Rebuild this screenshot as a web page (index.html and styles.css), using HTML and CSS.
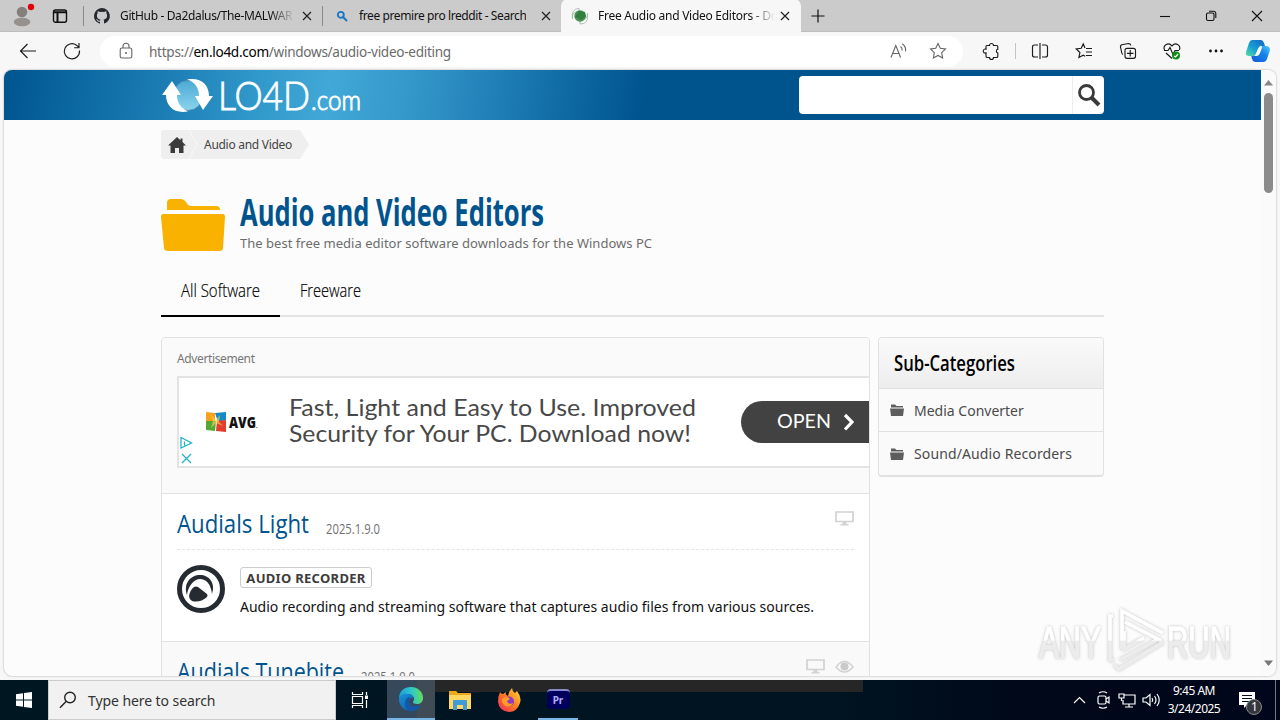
FILE: index.html
```html
<!DOCTYPE html>
<html lang="en">
<head>
<meta charset="utf-8">
<title>Free Audio and Video Editors</title>
<link rel="stylesheet" href="styles.css">
</head>
<body>
<header class="tabbar">
  <div class="profile"><svg width="26" height="28" viewBox="0 0 26 28"><circle cx="13" cy="10" r="5.3" fill="#85807c"/><ellipse cx="13" cy="20" rx="8.3" ry="4.2" fill="#96918c"/><circle cx="22" cy="5" r="3.2" fill="#e3000b"/></svg></div>
  <div class="workspaces"><svg width="16" height="16" viewBox="0 0 16 16" fill="none" stroke="#111" stroke-width="1.4"><rect x="1.5" y="2" width="13" height="12.3" rx="2"/><path d="M1.5 4.2h13M5.5 4v10" stroke-width="2"/></svg></div>
  <div class="tab tab-first">
    <svg class="fav" width="16" height="16" viewBox="0 0 16 16"><path fill="#24292f" d="M8 0a8 8 0 0 0-2.5 15.6c.4.1.5-.2.5-.4v-1.5c-2.2.5-2.7-1-2.7-1-.4-.9-.9-1.2-.9-1.2-.7-.5.1-.5.1-.5.8.1 1.2.8 1.2.8.7 1.3 1.9.9 2.4.7.1-.5.3-.9.5-1.1-1.8-.2-3.7-.9-3.7-4 0-.9.3-1.6.8-2.1-.1-.2-.4-1 .1-2.1 0 0 .7-.2 2.2.8a7.6 7.6 0 0 1 4 0c1.5-1 2.2-.8 2.2-.8.5 1.1.2 1.9.1 2.1.5.6.8 1.3.8 2.1 0 3.1-1.9 3.8-3.7 4 .3.3.6.8.6 1.5v2.2c0 .2.1.5.6.4A8 8 0 0 0 8 0z"/></svg>
    <span class="tab-title fade t1">GitHub - Da2dalus/The-MALWAR</span>
    <svg class="x" width="10" height="10" viewBox="0 0 10 10"><path d="M1 1l8 8M9 1L1 9"/></svg>
  </div>
  <div class="tab tab-second">
    <svg class="fav" width="14" height="14" viewBox="0 0 14 14" fill="none" stroke="#1976c5"><circle cx="5.8" cy="5.8" r="3" stroke-width="1.8"/><path d="M8 8l4 4" stroke-width="2"/></svg>
    <span class="tab-title t2">free premire pro lreddit - Search</span>
    <svg class="x" width="10" height="10" viewBox="0 0 10 10"><path d="M1 1l8 8M9 1L1 9"/></svg>
  </div>
  <div class="tab tab-active">
    <svg class="fav" width="18" height="18" viewBox="0 0 18 18"><path d="M8 1.500Q0 1.500 1.500 12 0 5 8 4zM9 17q9 0 7.500-10.500Q17 13 9 14z" fill="#fff" stroke="#9bb49d" stroke-width=".8"/><circle cx="9" cy="9" r="5.700" fill="#4e9256"/><path d="M4 10l4-6 6 1 1 5-5 3z" fill="#2f7f3d"/></svg>
    <span class="tab-title fade t3">Free Audio and Video Editors - Do</span>
    <svg class="x" width="10" height="10" viewBox="0 0 10 10"><path d="M1 1l8 8M9 1L1 9"/></svg>
  </div>
  <div class="newtab"><svg width="14" height="14" viewBox="0 0 14 14"><path d="M7 .5v13M.5 7h13" stroke="#111" stroke-width="1.2"/></svg></div>
  <div class="winctl">
    <span><svg width="12" height="12" viewBox="0 0 12 12"><path d="M1 6.5h10"/></svg></span>
    <span><svg width="12" height="12" viewBox="0 0 12 12"><rect x="1.5" y="3" width="7.5" height="7.5" rx="1.5"/><path d="M4 1.3h4.5a2.3 2.3 0 0 1 2.3 2.3V8"/></svg></span>
    <span><svg width="12" height="12" viewBox="0 0 12 12"><path d="M1 1l10 10M11 1L1 11"/></svg></span>
  </div>
</header>

<nav class="toolbar">
  <span class="tool"><svg width="18" height="18" viewBox="0 0 18 18"><path d="M17 9H1.500M8.500 2L1.500 9l7 7"/></svg></span>
  <span class="tool"><svg width="18" height="18" viewBox="0 0 18 18"><path d="M16.500 8.500A7.600 7.600 0 1 1 13.500 3.200L16 5.500M16 1v4.700h-4.800"/></svg></span>
  <div class="address">
    <svg class="lock" width="14" height="18" viewBox="0 0 14 18"><rect x="1.200" y="6" width="11.600" height="10" rx="1.800"/><path d="M4 6V4.200a3 3 0 0 1 6 0V6"/><circle cx="7" cy="11" r="1" fill="#666" stroke="none"/></svg>
    <span class="url">https://<b>en.lo4d.com</b>/windows/audio-video-editing</span>
    <svg class="aloud" width="18" height="18" viewBox="0 0 18 18"><path d="M2 15.500L6.800 3.500l4.800 12M3.800 11.500h6M11.500 4.500a4 4 0 0 1 1.500 4M13.300 1.800q4 3 3.200 7.500"/></svg>
    <svg class="star" width="18" height="18" viewBox="0 0 18 18"><path d="M9 1.500l2.300 4.800 5.200.7-3.800 3.700.9 5.300L9 13.500 4.400 16l.9-5.300L1.500 7l5.200-.7z"/></svg>
  </div>
  <span class="tool ext"><svg width="18" height="18" viewBox="0 0 18 18"><path d="M4.800 3.500H7.500a2 2 0 0 1 4 0h3q1.300 0 1.300 1.200V7.300a1.900 1.900 0 0 0 0 3.700v3.200q0 1.300-1.300 1.300h-3a2 2 0 0 1-4 0H5.500q-1.500 0-1.500-1.300v-3.300a2 2 0 1 1 0-3.700V4.500q0-1 .8-1z"/></svg></span>
  <i class="sep"></i>
  <span class="tool"><svg width="18" height="18" viewBox="0 0 18 18"><path d="M7 3H3.500Q1.500 3 1.500 5v8q0 2 2 2H7M11 3h3.500q2 0 2 2v8q0 2-2 2H11M9 1v16"/></svg></span>
  <span class="tool"><svg width="18" height="18" viewBox="0 0 18 18"><path d="M10 6L8.200 2 6.200 6.300 1.200 7l3.700 3.500-1 5 4.300-2.300 2 1M11 6.500h6M11 10h6M11 13.500h6"/></svg></span>
  <span class="tool"><svg width="18" height="18" viewBox="0 0 18 18"><rect x="6" y="6.300" width="10.500" height="10" rx="2"/><path d="M8 11.300h6.500M11.200 8v6.500M4 12.500Q3 12 2.800 11L1.500 5Q1.200 3 3 2.700L9.500 1.500q2 0 2.300 2"/></svg></span>
  <span class="tool"><svg width="18" height="18" viewBox="0 0 18 18"><path d="M1.500 8C-.5 3 5.500-.5 9 4c3.500-4.500 9-1 7.500 4M1 8.500h4L7 5.500l3 7 2-4h4M3 11l6 5.500"/><circle cx="13" cy="13.500" r="4" fill="#138a18" stroke="none"/><path d="M11 14l1.500 1 2.600-3" stroke="#fff"/></svg></span>
  <span class="tool"><svg width="18" height="18" viewBox="0 0 18 18"><g fill="#111" stroke="none"><circle cx="3.500" cy="9" r="1.400"/><circle cx="9" cy="9" r="1.400"/><circle cx="14.500" cy="9" r="1.400"/></g></svg></span>
  <span class="copilot"><svg width="26" height="26" viewBox="0 0 26 26"><defs><linearGradient id="ca" x1="0" y1="1" x2="1" y2="0"><stop offset="0" stop-color="#59dfa0"/><stop offset=".45" stop-color="#169fd4"/><stop offset="1" stop-color="#1463c4"/></linearGradient><linearGradient id="cb" x1="0" y1="1" x2="1" y2="0"><stop offset="0" stop-color="#1256d8"/><stop offset=".6" stop-color="#1685e8"/><stop offset="1" stop-color="#52c9fa"/></linearGradient></defs><path d="M7 2h9q2 0 3 3l1 3h-4q-2 0-3 3l-2 5q-1 2-3 2H4q-4 0-3-4L4 5q1-3 3-3z" fill="url(#ca)"/><path d="M19 24h-9q-2 0-3-3l-.7-3H9q2 0 3-2l2-5q1-3 3-3h4q4 0 4 4l-3 9q-1 3-3 3z" fill="url(#cb)"/><path d="M10 18l3-7q1-3 4-3h-1q1.500 0 .5 3l-1.500 4q-1 3-4 3z" fill="#fff"/></svg></span>
</nav>

<main class="window">
  <div class="page">
    <header class="site-header">
      <div class="wrap head-row">
        <svg class="logo" width="202" height="40" viewBox="0 0 202 40">
          <defs><linearGradient id="globe" x2="0" y2="1"><stop stop-color="#4ba9d5"/><stop offset="1" stop-color="#8bd4ec"/></linearGradient></defs>
          <circle cx="27" cy="19.500" r="15" fill="url(#globe)" stroke="#4d8eae"/>
          <path d="M11 5L20 19h-4c0 8 4 13 11 16.500C13 38 5 30 5 19H1z" fill="#fff"/>
          <path d="M42 34L34 20h4c0-8-4-14-12-16.500C40 1 48 9 48 20h4z" fill="#fff"/>
          <text x="57" y="34" class="logo-big" textLength="92" lengthAdjust="spacingAndGlyphs">LO4D</text>
          <text x="150" y="34" class="logo-small" textLength="50" lengthAdjust="spacingAndGlyphs">.com</text>
        </svg>
        <div class="search"><span class="search-btn"><svg width="24" height="24" viewBox="0 0 24 24" fill="none" stroke="#3b3b3b"><circle cx="9.500" cy="9.500" r="7" stroke-width="2.800"/><path d="M14.500 14.500l7.500 7.500" stroke-width="4"/></svg></span></div>
      </div>
    </header>
    <div class="wrap">
      <div class="crumbs">
        <svg class="crumb-bg" width="149" height="29" viewBox="0 0 149 29"><path d="M3 0h136l9 14.500-9 14.500H3q-3 0-3-3V3q0-3 3-3z" fill="#efefef"/><path d="M28 0l8 14.500L28 29" fill="none" stroke="#f8f8f8"/></svg>
        <svg class="home" width="18" height="16" viewBox="0 0 18 16"><path d="M9 0L0 8.500h2.500V16H7v-5h4v5h4.500V8.500H18L14.500 5V1.500h-2V3.300z" fill="#3b3b3b"/></svg>
        <span class="crumb-text">Audio and Video</span>
      </div>
      <section class="title-row">
        <svg class="folder" width="64" height="54" viewBox="0 0 64 54"><path fill="#f9b200" d="M6 12V5q0-4 4-4h10q3 0 5 3l2 3q1 1 4 1h24q4 0 4 4zM2 16h60q2 0 2 3l-2 31q0 3-4 3H7q-4 0-4-3L0 19q0-3 2-3z"/></svg>
        <div>
          <h1><svg width="306" height="38"><text x="0" y="30" textLength="304" lengthAdjust="spacingAndGlyphs">Audio and Video Editors</text></svg></h1>
          <p class="subtitle">The best free media editor software downloads for the Windows PC</p>
        </div>
      </section>
      <div class="tabs">
        <span class="ptab on"><svg width="79" height="26"><text y="19" textLength="79" lengthAdjust="spacingAndGlyphs">All Software</text></svg></span>
        <span class="ptab"><svg width="61" height="26"><text y="19" textLength="61" lengthAdjust="spacingAndGlyphs">Freeware</text></svg></span>
      </div>
      <div class="columns">
        <section class="list">
          <div class="ad">
            <p class="ad-label">Advertisement</p>
            <div class="ad-box">
              <div class="ad-marks"><svg width="13" height="29" viewBox="0 0 13 29" fill="none" stroke="#24b3c6" stroke-width="1.300"><path d="M1 1.500v10.500l10.500-5zM4.500 5.500v4M2 18l9 9M11 18l-9 9"/></svg></div>
              <svg class="avg" width="54" height="22" viewBox="0 0 54 22"><path d="M1 1l9 1v8H1z" fill="#f9a11b"/><path d="M10 2l11-1v8l-8 2z" fill="#168ac6"/><path d="M1 10h10l-1 10-9-1z" fill="#54a936"/><path d="M12 10l9-1v12l-10-1z" fill="#e23d2e"/><path d="M6 4l5 5 4-5-1 7 4 4-7-3-5 5 2-7z" fill="#f6d34b" opacity=".65"/><text x="24" y="17" textLength="27" lengthAdjust="spacingAndGlyphs">AVG</text><circle cx="52" cy="16.500" r=".6" fill="#333"/></svg>
              <svg class="ad-copy" width="410" height="60"><text y="24" textLength="407" lengthAdjust="spacingAndGlyphs">Fast, Light and Easy to Use. Improved</text><text y="50" textLength="402" lengthAdjust="spacingAndGlyphs">Security for Your PC. Download now!</text></svg>
              <div class="open"><svg width="80" height="30"><text y="21" textLength="54" lengthAdjust="spacingAndGlyphs">OPEN</text><path d="M68 8l7 7-7 7.500" fill="none" stroke="#fff" stroke-width="3.200"/></svg></div>
            </div>
          </div>
          <article class="item">
            <div class="item-head">
              <svg class="item-title" width="132" height="36"><text y="27" textLength="132" lengthAdjust="spacingAndGlyphs">Audials Light</text></svg>
              <svg class="ver" width="54" height="36"><text y="28" textLength="54" lengthAdjust="spacingAndGlyphs">2025.1.9.0</text></svg>
              <span class="platforms"><svg width="19" height="15" viewBox="0 0 19 15"><path d="M1 1h17v9.500H1z" fill="none" stroke="#d2d2d2" stroke-width="1.700"/><path d="M7.500 11h4v2h2v1.600h-8V13h2z" fill="#d2d2d2"/></svg></span>
            </div>
            <div class="item-body">
              <svg class="app" width="48" height="48" viewBox="0 0 48 48"><circle cx="24" cy="24" r="21.500" fill="#fff" stroke="#252b30" stroke-width="5"/><path d="M10 30C6 18 14 10 23 10s16 8 12 19C34 19 29 14 23 14S11 21 10 30z" fill="#252b30"/><path d="M12 31q1-6 5-9 2-1 4 0l9 7q1 1 0 3-7 6-15 4-3-2-3-5z" fill="#252b30"/></svg>
              <div class="info"><span class="badge">AUDIO RECORDER</span><p class="desc">Audio recording and streaming software that captures audio files from various sources.</p></div>
            </div>
          </article>
          <article class="item alt">
            <div class="item-head">
              <svg class="item-title" width="167" height="36"><text y="27" textLength="167" lengthAdjust="spacingAndGlyphs">Audials Tunebite</text></svg>
              <svg class="ver" width="54" height="36"><text y="28" textLength="54" lengthAdjust="spacingAndGlyphs">2025.1.9.0</text></svg>
              <span class="platforms"><svg width="19" height="15" viewBox="0 0 19 15"><path d="M1 1h17v9.500H1z" fill="none" stroke="#d2d2d2" stroke-width="1.700"/><path d="M7.500 11h4v2h2v1.600h-8V13h2z" fill="#d2d2d2"/></svg><svg width="19" height="15" viewBox="0 0 19 15"><path d="M1 8q8.500-11 17 0-8.500 10-17 0z" fill="none" stroke="#d2d2d2" stroke-width="1.500"/><circle cx="9.500" cy="7.500" r="4" fill="#cacaca"/></svg></span>
            </div>
          </article>
        </section>
        <aside class="side">
          <h2><svg width="122" height="30"><text y="23" textLength="121" lengthAdjust="spacingAndGlyphs">Sub-Categories</text></svg></h2>
          <a class="cat"><svg width="14" height="12" viewBox="0 0 14 12"><path d="M1 3V0.500h4L6.500 2H13v1.500H1zM0 4.500h14L13 12H1z" fill="#5d5d5d"/></svg><span>Media Converter</span></a>
          <a class="cat"><svg width="14" height="12" viewBox="0 0 14 12"><path d="M1 3V0.500h4L6.500 2H13v1.500H1zM0 4.500h14L13 12H1z" fill="#5d5d5d"/></svg><span class="c2">Sound/Audio Recorders</span></a>
        </aside>
      </div>
    </div>
  </div>
  <div class="scroll"><svg width="9" height="6" viewBox="0 0 9 6"><path d="M0 5.500L4.500 0 9 5.500z" fill="#888"/></svg><i class="thumb"></i><svg width="9" height="6" viewBox="0 0 9 6"><path d="M0 .5h9L4.500 6z" fill="#777"/></svg></div>
</main>

<svg class="watermark" width="200" height="68" viewBox="0 0 200 68">
  <defs><filter id="wm" x="-10%" y="-15%" width="120%" height="130%"><feDropShadow dx="0" dy="0" stdDeviation="1.600" flood-color="#555" flood-opacity=".4"/></filter><linearGradient id="wf" gradientUnits="userSpaceOnUse" x1="0" x2="0" y1="0" y2="68"><stop offset=".5" stop-color="#fff"/><stop offset=".52" stop-color="#ececec"/></linearGradient></defs>
  <g filter="url(#wm)">
    <text x="3" y="52" textLength="62" lengthAdjust="spacingAndGlyphs">ANY</text>
    <text x="131" y="52" textLength="64" lengthAdjust="spacingAndGlyphs">RUN</text>
    <g fill="none" stroke="url(#wf)" stroke-width="3.500"><path d="M77 10h-3v44h4M86 43V5l41 22M89 16l33 17-38 21M88 25v18l20-11M78 59l5 4 43-26-3-4"/></g>
  </g>
</svg>

<footer class="taskbar">
  <i class="strip"></i>
  <span class="start"><svg width="16" height="16" viewBox="0 0 16 16"><path d="M0 2.200L7 1.200V7.500H0zM8 1.100L16 0v7.500H8zM0 8.500h7v6.300L0 13.800zM8 8.500h8V16l-8-1.100z" fill="#fff"/></svg></span>
  <div class="tb-search"><svg width="18" height="18" viewBox="0 0 18 18" fill="none" stroke="#222" stroke-width="1.400"><circle cx="11" cy="6.500" r="5.300"/><path d="M7 10.500L1 16.800"/></svg><span>Type here to search</span></div>
  <span class="tb-icon view"><svg width="18" height="18" viewBox="0 0 18 18" fill="none" stroke="#fff" stroke-width="1.200"><path d="M1.500 1v2.500h10V1M1.500 17v-2.500h10V17M1.500 5.500h10v7h-10zM15.500 1v3M15.500 9v8"/><path d="M14 4.500h3V8h-3z" fill="#fff" stroke="none"/></svg></span>
  <span class="tb-icon edge"><svg width="26" height="26" viewBox="0 0 26 26"><defs><linearGradient id="eg" x1="0" y1=".4" x2="1" y2=".3"><stop stop-color="#16a2dc"/><stop offset=".55" stop-color="#31c8c6"/><stop offset="1" stop-color="#68df52"/></linearGradient><linearGradient id="eb" x2="1" y2="1"><stop stop-color="#1596dd"/><stop offset="1" stop-color="#104c9b"/></linearGradient></defs><path d="M1 13C1 5 6 1 13 1c8 0 12 6 12 11 0 4-3 6-6 6-3 0-4-1-4-2 0-1 1-1 1-3 0-3-3-5-6-5-5 0-8 2-9 5z" fill="url(#eg)"/><path d="M1 13c1-4 5-6 9-5 3 0 5 2 6 4-2-1-5 0-5 4 0 4 5 6 12 3-2 4-6 6-10 6C6 25 1 20 1 13z" fill="url(#eb)"/><path d="M11 11c-5 2-5 9-1 13 7 2 12-2 13-5-7 3-12 1-12-3 0-2 0-3 2-4z" fill="#1557a5"/></svg></span>
  <span class="tb-icon"><svg width="22" height="20" viewBox="0 0 22 20"><path d="M0 1h7l2 2h13v15H0z" fill="#eda91c"/><path d="M0 5h22v14H0z" fill="#ffd765"/><path d="M4 11q0-1 1-1h12q1 0 1 1v9h-4v-5H8v5H4z" fill="#409bd7"/></svg></span>
  <span class="tb-icon"><svg width="24" height="24" viewBox="0 0 24 24"><defs><linearGradient id="ff" x1="1" x2="0" y2="1"><stop stop-color="#ffe13c"/><stop offset=".5" stop-color="#ff7a20"/><stop offset="1" stop-color="#ef2466"/></linearGradient></defs><path d="M3 4q1 2 3 2l3-2q-1 3 2 4 1-5 4-8 0 3 3 5l2-2q5 6 3 12-3 9-11 9Q2 23 1 14 1 8 3 4z" fill="url(#ff)"/><circle cx="12" cy="13.500" r="5" fill="#8c39c8"/><path d="M5 11q5-4 8 0l-3 2q1 4 6 2-2 5-8 3-4-3-3-7z" fill="#ff9d24"/></svg></span>
  <span class="tb-icon pr"><b>Pr</b></span>
  <div class="tray">
    <svg width="24" height="20" viewBox="0 0 24 20"><path d="M7 13l5.500-5.500L18 13"/></svg>
    <svg width="24" height="20" viewBox="0 0 24 20"><rect x="7" y="6" width="8" height="8" rx="1.500"/><path d="M15 9l3-2v6l-3-2M8 3q4-2.500 8 0M8 17q4 2.500 8 0"/></svg>
    <svg width="24" height="20" viewBox="0 0 24 20"><path d="M9 5h11v9H8v-4M14 14v3M10 17h8M4 4h5v4H4zM6.500 8v3"/></svg>
    <svg width="24" height="20" viewBox="0 0 24 20"><path d="M4 8v4h3l4 3.500V4.500L7 8zM13 8q1.500 2 0 4M15.500 6q3 4 0 8M18 4q4.500 6 0 12"/></svg>
    <div class="clock"><span>9:45 AM</span><span>3/24/2025</span></div>
    <div class="notice"><svg width="26" height="26" viewBox="0 0 26 26"><path d="M1 2h16v13H9l-3 3v-3H1z" fill="#fff" stroke="none"/><path d="M4 5.500h10M4 8.500h10M4 11.500h7" stroke="#00101c"/><circle cx="16" cy="17" r="7.500" fill="#34383e" stroke="#86898c"/><text x="13" y="21">1</text></svg></div>
  </div>
</footer>
</body>
</html>
```
FILE: styles.css
```css
* { box-sizing: border-box; }
body { margin: 0; width: 1280px; height: 720px; overflow: hidden; display: flex; flex-direction: column; background: #f7f7f7; font-family: "Noto Sans", "Open Sans", sans-serif; font-size: 12px; color: #111; position: relative; }
svg { display: block; flex: none; overflow: visible; }
span, p, a { white-space: nowrap; }
p, h1, h2 { margin: 0; font-weight: 400; }

/* browser tabs */
.tabbar { height: 32px; flex: none; display: flex; align-items: center; background: #cbcbcb; border-bottom: 1px solid #bdbdbd; }
.profile { width: 44px; padding-left: 9px; }
.workspaces { width: 39px; padding-left: 8px; }
.tab { height: 32px; display: flex; align-items: center; padding-bottom: 1px; }
.tab .x { stroke: #222; stroke-width: 1.2; fill: none; margin-left: auto; }
.tab-first { width: 240px; padding: 0 10px; border-left: 1px solid #888; height: 20px; border-right: 1px solid #888; }
.tab-second { width: 238px; padding: 0 10px 0 12px; }
.tab-active { width: 240px; padding: 0 11px 0 10px; background: #f7f7f7; border-radius: 7px 7px 0 0; height: 33px; }
.fav { margin-right: 10px; }
.tab-title { overflow: hidden; line-height: 20px; }
.t1 { width: 175px; letter-spacing: -.36px; }
.t2 { letter-spacing: -.4px; }
.t3 { width: 177px; letter-spacing: -.27px; margin-left: -1px; }
.fade { -webkit-mask-image: linear-gradient(90deg, #000 86%, transparent); mask-image: linear-gradient(90deg, #000 86%, transparent); }
.newtab { padding-left: 10px; }
.winctl { margin-left: auto; display: flex; }
.winctl span { width: 46px; display: flex; justify-content: center; }
.winctl svg { fill: none; stroke: #111; stroke-width: 1.1; }

/* toolbar */
.toolbar { height: 38px; flex: none; display: flex; align-items: center; padding-left: 6px; background: #f7f7f7; }
.tool { width: 44px; display: flex; justify-content: center; }
.tool svg { fill: none; stroke: #1b1b1b; stroke-width: 1.15; }
.address { width: 863px; height: 31px; margin-left: 6px; border-radius: 16px; background: #fff; display: flex; align-items: center; padding: 0 16px 0 19px; }
.address svg { fill: none; stroke: #666; stroke-width: 1.1; }
.url { margin-left: 16px; font-size: 13.6px; color: #6b6b6b; letter-spacing: -.3px; }
.url b { font-weight: 400; color: #000; }
.aloud { margin-left: auto; margin-right: 22px; }
.ext { margin-left: 6px; }
.sep { width: 1px; height: 16px; background: #c4c4c4; margin: 0 2px; }
.copilot { margin-left: 7px; }

/* page viewport */
.window { width: 1272px; height: 606px; margin-left: 4px; flex: none; display: flex; border-radius: 8px; overflow: hidden; background: #fcfcfc; box-shadow: 0 0 2px #999; }
.page { width: 1257px; overflow: hidden; }
.wrap { width: 943px; margin-left: 157px; }
.site-header { height: 50px; background: linear-gradient(98deg, #00548e 0, #0a659f 5%, #1c7db5 13%, #3098ca 20%, #41a8d7 26%, #3599cb 32%, #1e7cb4 40%, #0b659f 46%, #00548e 51%); }
.head-row { display: flex; padding-top: 6px; justify-content: space-between; }
.logo text { font-family: "Lato", sans-serif; font-weight: 300; fill: #fff; stroke: #fff; stroke-width: .9px; }
.logo-big { font-size: 40px; }
.logo-small { font-size: 27px; }
.search { width: 305px; height: 38px; background: #fff; border-radius: 4px; display: flex; justify-content: flex-end; }
.search-btn { width: 32px; border-left: 1px solid #eee; display: grid; place-items: center; }
.crumbs { position: relative; height: 29px; margin-top: 10px; display: flex; align-items: center; }
.crumb-bg { position: absolute; inset: 0; }
.home { position: relative; margin-left: 7px; }
.crumb-text { position: relative; margin-left: 18px; color: #444; letter-spacing: -.28px; }
.title-row { display: flex; gap: 15px; padding-top: 37px; height: 119px; }
.folder { margin-top: 2px; }
h1 { height: 37px; }
h1 text { font: 700 37.5px "Open Sans", sans-serif; fill: #00548e; }
.subtitle { font-size: 13px; line-height: 20px; color: #6c6c6c; letter-spacing: .02px; }
.tabs { height: 39px; display: flex; border-bottom: 2px solid #e3e3e3; }
.ptab { height: 39px; padding: 0 20px; }
.ptab.on { border-bottom: 2px solid #000; }
.ptab text { font: 300 19px "Open Sans", sans-serif; fill: #000; stroke: #000; stroke-width: .2px; }
.columns { display: flex; gap: 8px; margin-top: 20px; align-items: flex-start; }
.list { width: 709px; border: 1px solid #e1e1e1; border-radius: 4px; overflow: hidden; }
.ad { height: 156px; background: #fafafa; border-bottom: 1px solid #e1e1e1; padding: 11px 0 0 15px; }
.ad-label { line-height: 20px; height: 27px; color: #777; letter-spacing: -.38px; }
.ad-box { width: 693px; height: 92px; border: 2px solid #e3e3e3; border-right: 0; background: #fff; display: flex; overflow: hidden; }
.ad-marks { padding: 58px 0 0 1px; width: 26px; }
.avg { margin: 33px 0 0 4px; }
.avg text { font: 800 15px "Open Sans", sans-serif; fill: #111; }
.ad-copy { margin: 14px 0 0 26px; transform: translateX(0); }
.ad-copy { margin-left: 30px; }
.ad-copy text { font: 400 24px "Lato", sans-serif; fill: #484848; }
.open { margin: 23px 0 0 42px; width: 150px; height: 42px; border-radius: 21px 0 0 21px; background: #424242; padding: 6px 0 0 36px; }
.open text { font: 400 20px "Lato", sans-serif; fill: #fff; }
.item { height: 148px; background: #fff; padding: 12px 15px 0; border-bottom: 1px solid #e1e1e1; }
.item.alt { background: #f9f9f9; }
.item-head { display: flex; height: 44px; border-bottom: 1px dashed #e5e5e5; }
.item-title text { font: 400 26px "Open Sans", sans-serif; fill: #00548e; }
.ver { margin-left: 17px; }
.ver text { font: 400 14px "Open Sans", sans-serif; fill: #707070; }
.platforms { margin-left: auto; padding-top: 5px; display: flex; gap: 10px; }
.item-body { display: flex; gap: 15px; padding-top: 15px; }
.info { padding-top: 2px; }
.badge { display: block; width: 132px; height: 21px; line-height: 20px; text-align: center; border: 1px solid #ccc; border-radius: 3px; font-size: 13px; letter-spacing: .3px; font-weight: 700; color: #3c3c3c; }
.desc { font-size: 14px; line-height: 20px; margin-top: 9px; color: #111; letter-spacing: .01px; }
.side { width: 226px; border: 1px solid #e1e1e1; border-bottom-width: 2px; border-radius: 4px; background: #fafafa; overflow: hidden; }
h2 { height: 50px; padding: 10px 0 0 15px; background: linear-gradient(#fafafa, #ededed); }
h2 text { font: 600 22px "Open Sans", sans-serif; fill: #000; }
.cat { height: 43px; display: flex; align-items: center; gap: 10px; padding-left: 11px; border-top: 1px solid #e1e1e1; font-size: 14px; color: #4a4a4a; }
.cat + .cat { height: 44px; }
.c2 { letter-spacing: .12px; }
.scroll { width: 15px; background: #fafafa; display: flex; flex-direction: column; align-items: center; padding: 10px 0 10px; }
.thumb { width: 9px; height: 100px; border-radius: 5px; background: #8b8b8b; margin: 7px 0 auto; }
.watermark { position: absolute; left: 1036px; top: 606px; }
.watermark text { font: 400 44px "Liberation Sans Narrow", "Liberation Sans", sans-serif; fill: url(#wf); stroke: url(#wf); stroke-width: 1px; }

/* taskbar */
.taskbar { position: absolute; left: 0; bottom: 0; width: 1280px; height: 40px; display: flex; background: linear-gradient(90deg, #001722, #001421 65%, #000819 80%, #00071c); }
.strip { position: absolute; left: 417px; top: 0; width: 446px; height: 12px; background: #262626; }
.start { width: 48px; display: grid; place-items: center; }
.tb-search { width: 288px; background: #f1f1f1; border: 1px solid #ccc; display: flex; align-items: center; padding-left: 10px; gap: 11px; font-size: 14px; color: #333; letter-spacing: -.08px; }
.tb-icon { width: 49px; display: grid; place-items: center; position: relative; }
.view { width: 48px; margin-right: 3px; }
.edge { width: 48px; background: linear-gradient(90deg, #35495a 62%, #3f4c55 62%); border-bottom: 2px solid #75b6e7; }
.pr { width: 40px; margin-left: 5px; border-bottom: 2px solid #75b6e7; }
.pr b { width: 23px; height: 20px; border-radius: 4px; background: #00005c; border-top: 2px solid #8888cf; color: #b3adff; font-size: 10px; line-height: 18px; text-align: center; }
.tray { margin-left: auto; display: flex; align-items: center; color: #fff; }
.tray > svg { fill: none; stroke: #fff; stroke-width: 1.2; }
.clock { width: 62px; display: flex; flex-direction: column; align-items: center; line-height: 18px; font-size: 12px; letter-spacing: -.5px; }
.notice { width: 51px; height: 40px; padding: 10px 0 0 13px; border-right: 1px solid #777; margin-right: 4px; }
.notice text { font-size: 12px; fill: #fff; }
```
